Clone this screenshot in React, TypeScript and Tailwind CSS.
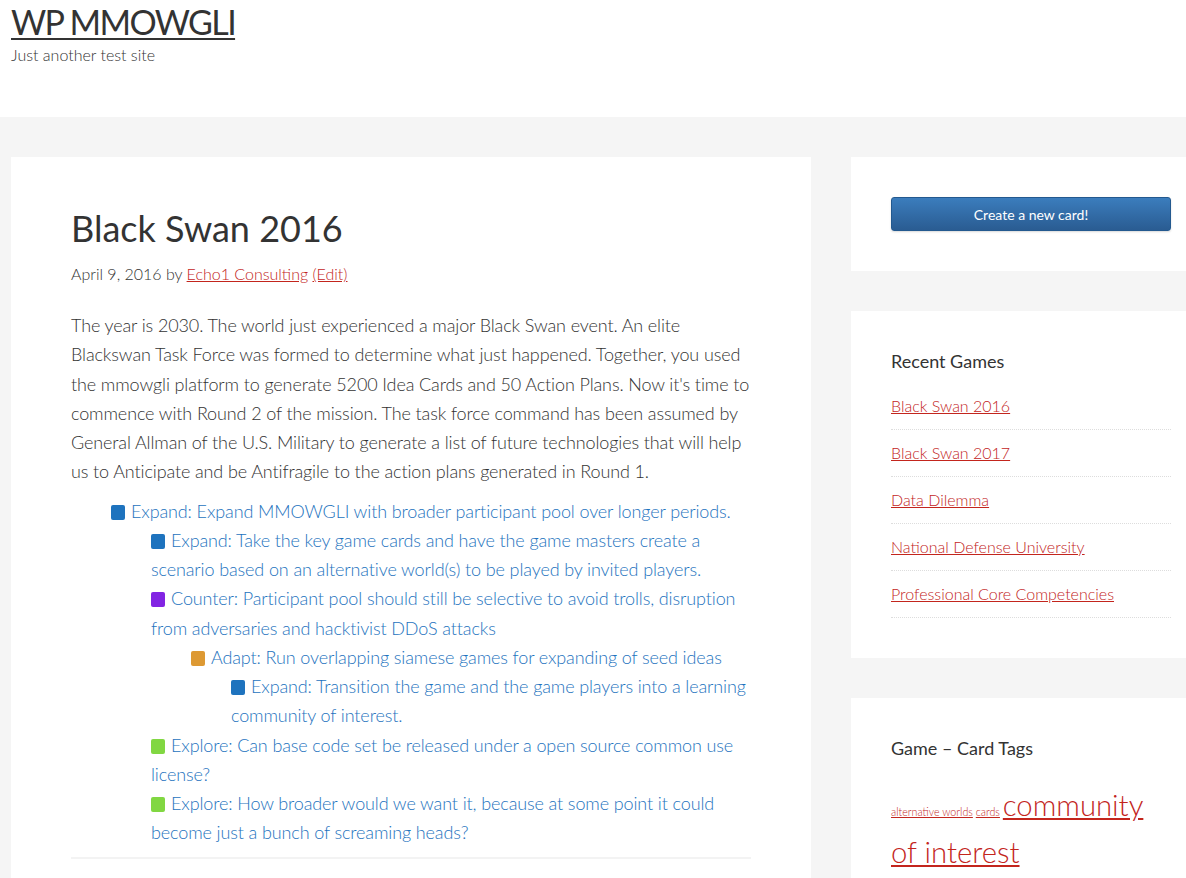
import React from 'react';

type Card = {
  color: string;
  text: string;
  children?: Card[];
};

const cards: Card[] = [
  {
    color: 'bg-[#1e73be]',
    text: 'Expand: Expand MMOWGLI with broader participant pool over longer periods.',
    children: [
      {
        color: 'bg-[#1e73be]',
        text: 'Expand: Take the key game cards and have the game masters create a scenario based on an alternative world(s) to be played by invited players.',
      },
      {
        color: 'bg-[#8224e3]',
        text: 'Counter: Participant pool should still be selective to avoid trolls, disruption from adversaries and hacktivist DDoS attacks',
        children: [
          {
            color: 'bg-[#dd9933]',
            text: 'Adapt: Run overlapping siamese games for expanding of seed ideas',
            children: [
              {
                color: 'bg-[#1e73be]',
                text: 'Expand: Transition the game and the game players into a learning community of interest.',
              },
            ],
          },
        ],
      },
      {
        color: 'bg-[#81d742]',
        text: 'Explore: Can base code set be released under a open source common use license?',
      },
      {
        color: 'bg-[#81d742]',
        text: 'Explore: How broader would we want it, because at some point it could become just a bunch of screaming heads?',
      },
    ],
  },
];

const recentGames = [
  'Black Swan 2016',
  'Black Swan 2017',
  'Data Dilemma',
  'National Defense University',
  'Professional Core Competencies',
];

const CardTree: React.FC<{ items: Card[] }> = ({ items }) => (
  <ul className="pl-10 list-none">
    {items.map((c, i) => (
      <li key={i}>
        <span className={`inline-block w-[14px] h-[15px] rounded-[2px] align-[-2px] mr-[6px] ${c.color}`}></span>
        {c.text}
        {c.children && <CardTree items={c.children} />}
      </li>
    ))}
  </ul>
);

export default function App() {
  return (
    <div className="min-h-screen w-full overflow-hidden bg-[#f5f5f5] text-[#333] font-['Lato',sans-serif]">
      {/* Header */}
      <header className="bg-white h-[117px] pl-[11px]">
        <h1 className="text-[34px] leading-[43px] font-normal tracking-[-1.6px]">
          <a href="#" className="underline decoration-2 underline-offset-[3px]">WP MMOWGLI</a>
        </h1>
        <p className="text-[16px] leading-[20px] font-light mt-[2px]">Just another test site</p>
      </header>

      <div className="flex gap-10 pl-[11px] pt-10 w-[1211px]">
        {/* Main content */}
        <main className="w-[800px] shrink-0 bg-white px-[60px] pt-[50px] pb-10 h-[760px]">
          <h1 className="text-[36px] leading-[1.2] font-normal mb-[11px]">Black Swan 2016</h1>
          <p className="text-[16px] leading-[26px] font-light mb-[24px]">
            April 9, 2016 by{' '}
            <a href="#" className="text-[#c3251d] underline">Echo1 Consulting</a>{' '}
            <a href="#" className="text-[#c3251d] underline">(Edit)</a>
          </p>
          <div className="text-[18px] leading-[29.25px] font-light tracking-[-0.12px]">
            <p className="mb-[10px]">
              The year is 2030. The world just experienced a major Black Swan event. An elite Blackswan Task Force was formed to determine what just happened. Together, you used the mmowgli platform to generate 5200 Idea Cards and 50 Action Plans. Now it's time to commence with Round 2 of the mission. The task force command has been assumed by General Allman of the U.S. Military to generate a list of future technologies that will help us to Anticipate and be Antifragile to the action plans generated in Round 1.
            </p>
            <div className="text-[#1e73be]">
              <CardTree items={cards} />
            </div>
          </div>
          <div className="border-b-2 border-[#f3f3f3] mt-[9px]"></div>
        </main>

        {/* Sidebar */}
        <aside className="w-[360px] shrink-0 flex flex-col gap-10">
          <section className="bg-white p-10">
            <button className="w-[280px] h-[34px] rounded-[3px] border border-[#23598f] bg-gradient-to-b from-[#3b7dbd] to-[#2a5c92] text-white text-[14px] shadow-[0_1px_2px_rgba(0,0,0,0.15)]">
              Create a new card!
            </button>
          </section>

          <section className="bg-white px-10 pt-10 pb-[30px]">
            <h4 className="text-[18px] leading-[1.2] font-normal mb-5">Recent Games</h4>
            <ul className="w-[280px]">
              {recentGames.map((g) => (
                <li key={g} className="text-[16px] leading-[26px] font-light pb-[10px] mb-[10px] border-b border-dotted border-[#ddd]">
                  <a href="#" className="text-[#c3251d] underline">{g}</a>
                </li>
              ))}
            </ul>
          </section>

          <section className="bg-white px-10 pt-10 pb-10">
            <h4 className="text-[18px] leading-[1.2] font-normal mb-5">Game – Card Tags</h4>
            <div className="w-[280px] font-light text-[29.3px] leading-[47px] pt-[2px]">
              <a href="#" className="text-[#c3251d] underline text-[10.7px] leading-[10px]">alternative worlds</a>
              <span className="text-[10.7px] leading-[10px]"> </span>
              <a href="#" className="text-[#c3251d] underline text-[10.7px] leading-[10px]">cards</a>
              <span className="text-[10.7px] leading-[10px]"> </span>
              <a href="#" className="text-[#c3251d] underline">community of interest</a>
            </div>
          </section>
        </aside>
      </div>
    </div>
  );
}
